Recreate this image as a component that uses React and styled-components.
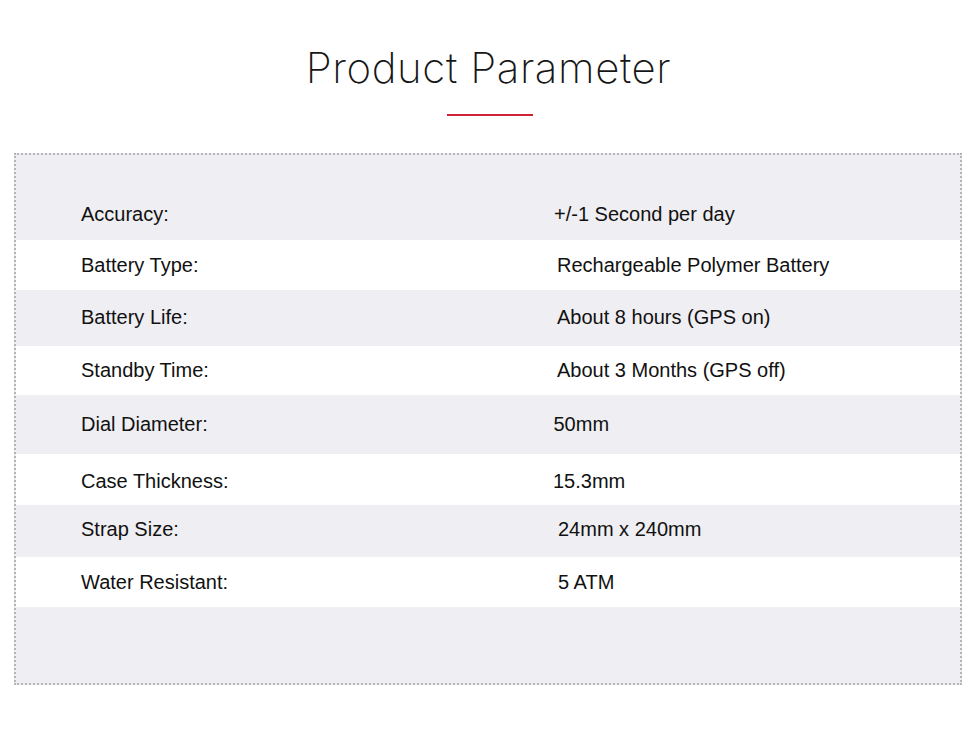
import React from "react";
import styled, { createGlobalStyle } from "styled-components";

const Global = createGlobalStyle`
  html, body { margin: 0; padding: 0; background: #ffffff; }
  body { font-family: "Liberation Sans", Arial, sans-serif; color: #111; }
`;

const Page = styled.div`
  width: 948px;
  margin-left: 14px;
  display: flex;
  flex-direction: column;
  align-items: center;
`;

const Title = styled.h1`
  margin: 47px 0 0;
  padding-left: 1px;
  font-family: Inter, "Liberation Sans", sans-serif;
  font-weight: 250;
  font-size: 42px;
  line-height: 42px;
  letter-spacing: 0.6px;
  color: #161616;
`;

const Accent = styled.div`
  width: 86px;
  height: 2px;
  margin: 25px 0 0 4px;
  background: #cf2438;
`;

const Table = styled.div`
  box-sizing: border-box;
  width: 948px;
  margin-top: 37px;
  border: 2px dotted #b4b4b8;
  background: #efeef2;
  padding: 33px 0 76px;
  display: flex;
  flex-direction: column;
`;

const Row = styled.div`
  box-sizing: border-box;
  height: ${(p) => p.$h}px;
  padding-top: ${(p) => Math.max(0, p.$dy * 2)}px;
  padding-bottom: ${(p) => Math.max(0, -p.$dy * 2)}px;
  padding-left: 65px;
  display: grid;
  grid-template-columns: 472px 1fr;
  align-items: center;
  background: ${(p) => (p.$odd ? "#ffffff" : "transparent")};
  font-size: 20px;
  color: #111111;
`;

const Label = styled.span`
  white-space: nowrap;
`;

const Value = styled.span`
  white-space: nowrap;
  padding-left: ${(p) => p.$shift}px;
`;

const rows = [
  { l: "Accuracy:", v: "+/-1 Second per day", h: 52, dy: 0, s: 1 },
  { l: "Battery Type:", v: "Rechargeable Polymer Battery", h: 50, dy: 0, s: 4 },
  { l: "Battery Life:", v: "About 8 hours (GPS on)", h: 56, dy: -1, s: 4 },
  { l: "Standby Time:", v: "About 3 Months (GPS off)", h: 49, dy: 0, s: 4 },
  { l: "Dial Diameter:", v: "50mm", h: 59, dy: 0, s: 0.5 },
  { l: "Case Thickness:", v: "15.3mm", h: 51, dy: 1.5, s: 0 },
  { l: "Strap Size:", v: "24mm x 240mm", h: 52, dy: -1.5, s: 5 },
  { l: "Water Resistant:", v: "5 ATM", h: 50, dy: 0, s: 5 },
];

export default function App() {
  return (
    <>
      <Global />
      <Page>
        <Title>Product Parameter</Title>
        <Accent />
        <Table>
          {rows.map((r, i) => (
            <Row key={r.l} $h={r.h} $dy={r.dy} $odd={i % 2 === 1}>
              <Label>{r.l}</Label>
              <Value $shift={r.s}>{r.v}</Value>
            </Row>
          ))}
        </Table>
      </Page>
    </>
  );
}
